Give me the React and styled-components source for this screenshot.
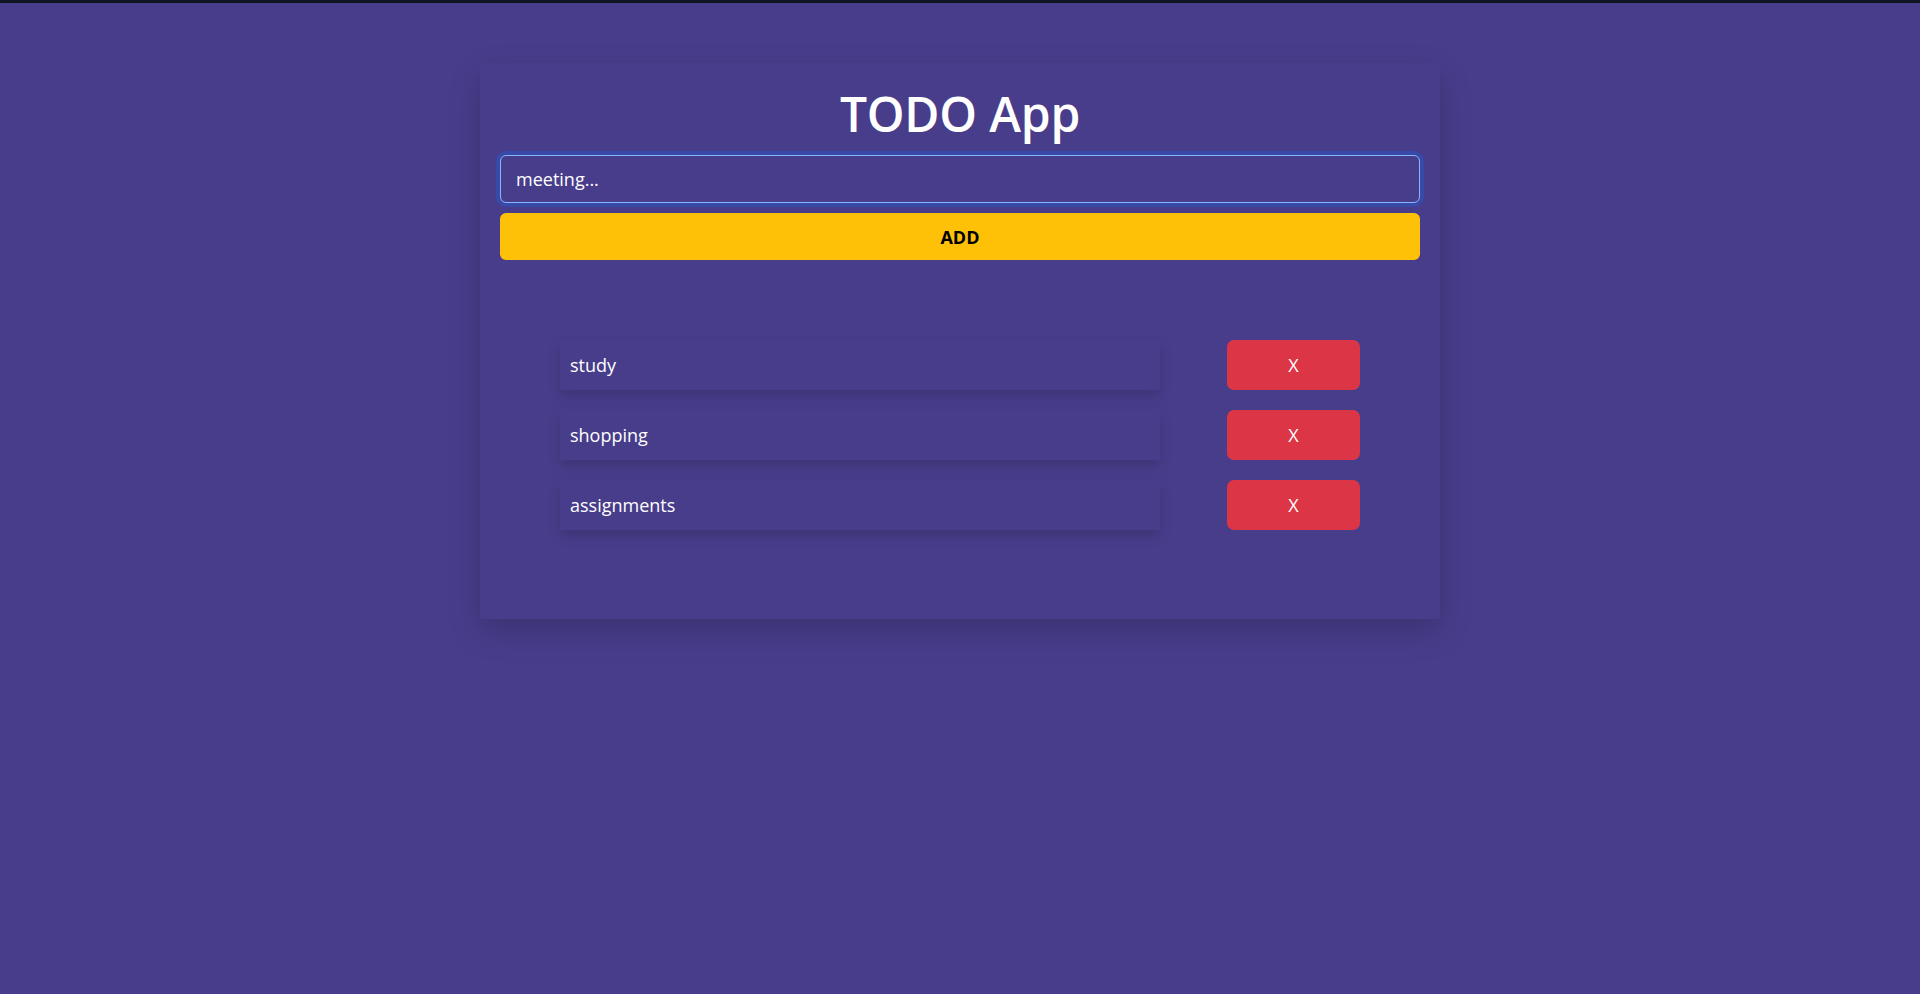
import React, { useState } from 'react'
import styled, { createGlobalStyle } from 'styled-components'

const GlobalStyle = createGlobalStyle`
  html, body {
    margin: 0;
    padding: 0;
    height: 100%;
    background: #483d8b;
  }
  body {
    font-family: "Open Sans", "Noto Sans", sans-serif;
    border-top: 3px solid #111522;
    box-sizing: border-box;
  }
  * { box-sizing: border-box; }
`

const Page = styled.div`
  min-height: 991px;
  padding-top: 60px;
  display: flex;
  justify-content: center;
  align-items: flex-start;
`

const Card = styled.div`
  width: 960px;
  background: #483d8b;
  padding: 20px 20px 89px;
  box-shadow: 0 12px 30px rgba(0, 0, 0, 0.18);
`

const Title = styled.h1`
  margin: 0 0 10px;
  text-align: center;
  color: #fff;
  font-size: 48px;
  font-weight: 600;
  line-height: 62px;
  letter-spacing: -0.2px;
`

const Input = styled.input`
  display: block;
  width: 100%;
  height: 48px;
  padding: 0 15px;
  font-family: inherit;
  font-size: 18px;
  color: #fff;
  background: #483d8b;
  border: 1px solid #86b7fe;
  border-radius: 6px;
  outline: none;
  box-shadow: 0 0 0 4px rgba(13, 110, 253, 0.25);
  caret-color: #fff;
`

const AddButton = styled.button`
  display: block;
  width: 100%;
  height: 47px;
  margin-top: 10px;
  border: none;
  border-radius: 6px;
  background: #ffc107;
  color: #000;
  font-family: inherit;
  font-size: 18px;
  font-weight: 700;
  cursor: pointer;
`

const List = styled.div`
  margin: 80px 60px 0;
  display: flex;
  flex-direction: column;
  gap: 20px;
`

const Row = styled.div`
  display: flex;
  align-items: center;
`

const Item = styled.div`
  flex: 0 0 600px;
  height: 50px;
  padding: 0 10px;
  display: flex;
  align-items: center;
  color: #fff;
  font-size: 18px;
  background: #483d8b;
  box-shadow: 0 6px 12px rgba(0, 0, 0, 0.15);
`

const RemoveButton = styled.button`
  flex: 0 0 133px;
  margin-left: 67px;
  height: 50px;
  border: none;
  border-radius: 7px;
  background: #dc3545;
  color: #fff;
  font-family: inherit;
  font-size: 18px;
  cursor: pointer;
`

export default function App() {
  const [text, setText] = useState('meeting...')
  const [todos, setTodos] = useState(['study', 'shopping', 'assignments'])

  const addTodo = () => {
    if (!text.trim()) return
    setTodos([...todos, text])
    setText('')
  }

  return (
    <>
      <GlobalStyle />
      <Page>
        <Card>
          <Title>TODO App</Title>
          <Input value={text} onChange={(e) => setText(e.target.value)} autoFocus />
          <AddButton onClick={addTodo}>ADD</AddButton>
          <List>
            {todos.map((t, i) => (
              <Row key={i}>
                <Item>{t}</Item>
                <RemoveButton onClick={() => setTodos(todos.filter((_, j) => j !== i))}>X</RemoveButton>
              </Row>
            ))}
          </List>
        </Card>
      </Page>
    </>
  )
}
